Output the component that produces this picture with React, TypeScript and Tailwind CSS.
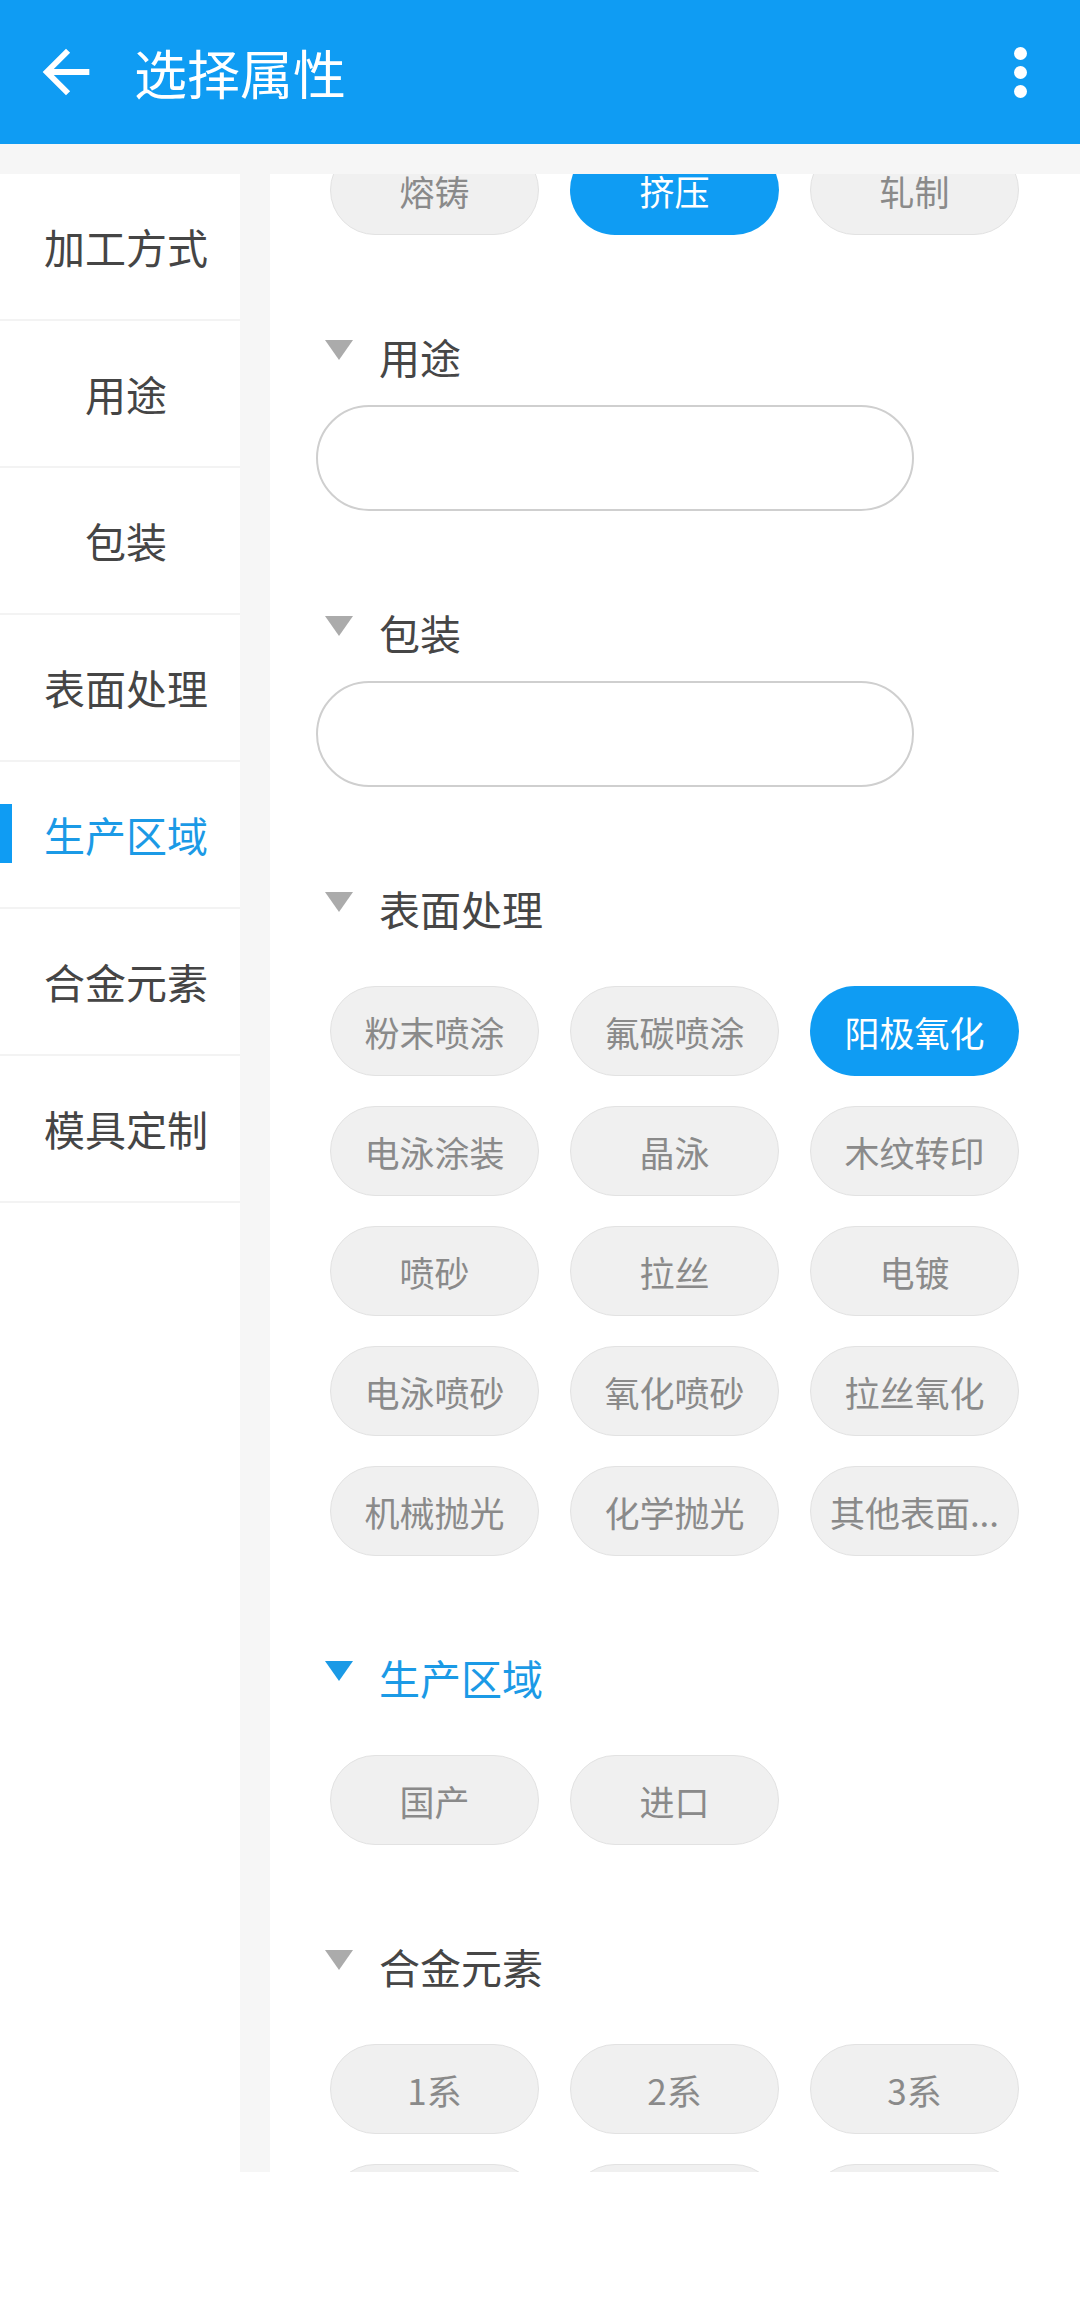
import React from "react";

const navItems = ["加工方式", "用途", "包装", "表面处理", "生产区域", "合金元素", "模具定制"];
const activeNav = "生产区域";

type Section = {
    title?: string;
    active?: boolean;
    input?: boolean;
    chips?: string[];
    selected?: string;
};

const sections: Section[] = [
    { chips: ["熔铸", "挤压", "轧制"], selected: "挤压" },
    { title: "用途", input: true },
    { title: "包装", input: true },
    {
        title: "表面处理",
        chips: [
            "粉末喷涂", "氟碳喷涂", "阳极氧化",
            "电泳涂装", "晶泳", "木纹转印",
            "喷砂", "拉丝", "电镀",
            "电泳喷砂", "氧化喷砂", "拉丝氧化",
            "机械抛光", "化学抛光", "其他表面...",
        ],
        selected: "阳极氧化",
    },
    { title: "生产区域", active: true, chips: ["国产", "进口"] },
    { title: "合金元素", chips: ["1系", "2系", "3系", "4系", "5系", "6系"] },
];

function Chip({ label, on }: { label: string; on: boolean }) {
    return (
        <div
            className={
                on
                    ? "h-[90px] rounded-full bg-[#0f9cf3] text-white text-[35px] leading-none flex items-center justify-center"
                    : "h-[90px] rounded-full bg-[#f0f0f0] border border-[#e2e2e2] text-[#8a8a8a] text-[35px] leading-none flex items-center justify-center"
            }
        >
            {label}
        </div>
    );
}

function SectionBlock({ s, first }: { s: Section; first: boolean }) {
    return (
        <div className={first ? "" : "mt-[93px]"}>
            {s.title && (
                <div className="ml-[55px] h-[56px] flex items-center">
                    <svg width="28" height="20" viewBox="0 0 28 20" className="mb-[12px] mr-[26px]">
                        <polygon points="0,0 28,0 14,20" fill={s.active ? "#1b9ae6" : "#ababab"} />
                    </svg>
                    <span className={s.active ? "text-[41px] leading-none text-[#1b9ae6]" : "text-[41px] leading-none text-[#464646]"}>
                        {s.title}
                    </span>
                </div>
            )}
            {s.input && <div className="mt-[21px] ml-[46px] w-[598px] h-[106px] rounded-full border-2 border-[#cfcfcf]" />}
            {s.chips && (
                <div className={`${s.title ? "mt-[50px]" : ""} ml-[60px] grid grid-cols-[repeat(3,209px)] gap-x-[31px] gap-y-[30px]`}>
                    {s.chips.map((c) => (
                        <Chip key={c} label={c} on={c === s.selected} />
                    ))}
                </div>
            )}
        </div>
    );
}

export default function App() {
    return (
        <div className="w-[1080px] h-[2304px] bg-white font-['Noto_Sans_CJK_SC','Noto_Sans',sans-serif] overflow-hidden">
            {/* Toolbar */}
            <div className="h-[144px] bg-[#0f9cf3] flex items-center">
                <svg width="70" height="70" viewBox="0 0 24 24" className="ml-[31px]">
                    <path d="M20 11H7.83l5.59-5.59L12 4l-8 8 8 8 1.41-1.41L7.83 13H20v-2z" fill="#fff" />
                </svg>
                <span className="ml-[33px] text-[53px] leading-none text-white">选择属性</span>
                <div className="ml-auto mr-[53px] flex flex-col gap-[6px]">
                    <span className="w-[13px] h-[13px] rounded-full bg-white" />
                    <span className="w-[13px] h-[13px] rounded-full bg-white" />
                    <span className="w-[13px] h-[13px] rounded-full bg-white" />
                </div>
            </div>

            <div className="h-[30px] bg-[#f6f6f6]" />

            <div className="h-[1998px] flex bg-[#f6f6f6]">
                {/* Left nav */}
                <div className="w-[240px] bg-white flex flex-col">
                    {navItems.map((n) => {
                        const on = n === activeNav;
                        return (
                            <div key={n} className="relative h-[147px] border-b-2 border-[#f3f3f3] flex items-center justify-center pl-[12px]">
                                {on && <span className="absolute left-0 top-[42px] w-[12px] h-[59px] bg-[#0f9cf3]" />}
                                <span className={on ? "text-[41px] leading-none text-[#1b9ae6]" : "text-[41px] leading-none text-[#454545]"}>{n}</span>
                            </div>
                        );
                    })}
                </div>

                {/* Options */}
                <div className="ml-[30px] flex-1 bg-white overflow-hidden">
                    <div className="-mt-[29px]">
                        {sections.map((s, i) => (
                            <SectionBlock key={i} s={s} first={i === 0} />
                        ))}
                    </div>
                </div>
            </div>
        </div>
    );
}
